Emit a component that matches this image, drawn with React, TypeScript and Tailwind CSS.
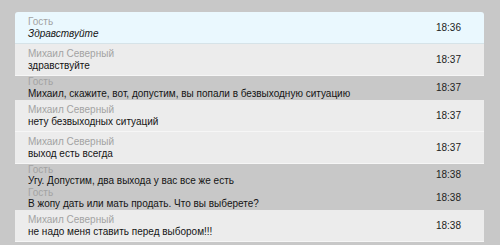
import React from "react";

type Msg = { name: string; text: string; time: string; kind: "blue" | "card" | "plain"; italic?: boolean; tight?: boolean };

const msgs: Msg[] = [
  { name: "Гость", text: "Здравствуйте", time: "18:36", kind: "blue", italic: true },
  { name: "Михаил Северный", text: "здравствуйте", time: "18:37", kind: "card" },
  { name: "Гость", text: "Михаил, скажите, вот, допустим, вы попали в безвыходную ситуацию", time: "18:37", kind: "plain" },
  { name: "Михаил Северный", text: "нету безвыходных ситуаций", time: "18:37", kind: "card" },
  { name: "Михаил Северный", text: "выход есть всегда", time: "18:37", kind: "card" },
  { name: "Гость", text: "Угу. Допустим, два выхода у вас все же есть", time: "18:38", kind: "plain", tight: true },
  { name: "Гость", text: "В жопу дать или мать продать. Что вы выберете?", time: "18:38", kind: "plain", tight: true },
  { name: "Михаил Северный", text: "не надо меня ставить перед выбором!!!", time: "18:38", kind: "card" },
];

function Row({ m }: { m: Msg }) {
  const base =
    m.kind === "blue"
      ? "bg-[#eaf8fe] border-b border-[#d6e3e8] pt-[4px] pb-[3px] rounded-t-[3px]"
      : m.kind === "card"
      ? "bg-[#ececec] border-b border-[#f6f6f6] pt-[4px] pb-[3px]"
      : "";
  return (
    <div className={`flex items-center pl-[13px] pr-[23px] ${base}`}>
      <div className="flex-1 min-w-0">
        <div className={`text-[10px] ${m.tight ? "leading-[11px]" : "leading-[12px]"} text-[#a3a3a3]`}>{m.name}</div>
        <div className={`text-[10px] leading-[12px] text-[#141414] ${m.italic ? "italic" : ""}`}>{m.text}</div>
      </div>
      <div className="text-[10px] leading-[12px] text-[#222222] pb-[1px]">{m.time}</div>
    </div>
  );
}

export default function App() {
  return (
    <div
      className="w-[500px] h-[245px] bg-[#c8c8c8] pl-[15px] pt-[12px] overflow-hidden"
      style={{ fontFamily: '"Liberation Sans", Arial, sans-serif' }}
    >
      <div className="w-[469px] flex flex-col">
        {msgs.map((m, i) => (
          <Row key={i} m={m} />
        ))}
      </div>
    </div>
  );
}
